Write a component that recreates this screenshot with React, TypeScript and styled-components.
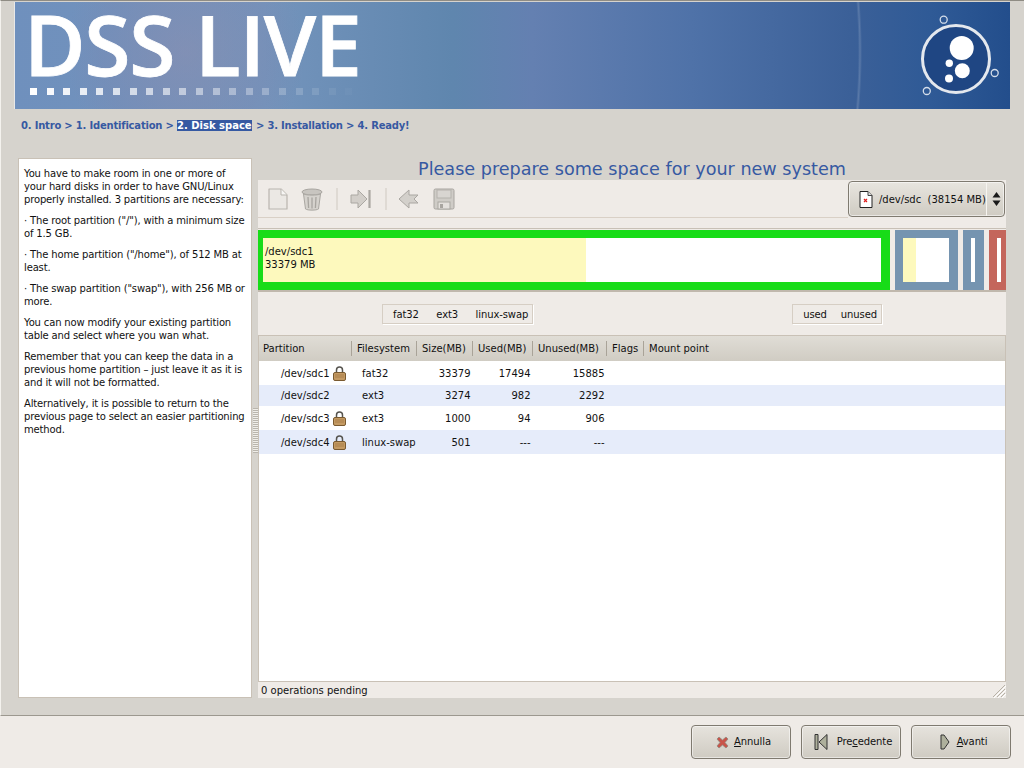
import React, { FC, ReactElement } from 'react';
import styled, { createGlobalStyle } from 'styled-components';

const Global = createGlobalStyle`
    html, body {
        margin: 0;
        padding: 0;
        background: #efebe7;
    }
    * {
        box-sizing: border-box;
    }
    body {
        font-family: "DejaVu Sans", sans-serif;
        font-size: 10px;
        color: #111;
    }
`;

const Page = styled.div`
    width: 1024px;
    height: 768px;
    overflow: hidden;
    display: flex;
    flex-direction: column;
`;

const Main = styled.div`
    height: 716px;
    background: #d6d3cd;
    border-top: 1px solid #8f8c84;
    border-left: 1px solid #f4f2ee;
    border-bottom: 1px solid #9c988f;
    display: flex;
    flex-direction: column;
    padding: 1px 0 0 13px;
`;

const Banner = styled.div`
    width: 996px;
    height: 107px;
    flex: none;
    display: flex;
    justify-content: space-between;
    padding-left: 15px;
    border-left: 1px solid #e8e8e8;
    background:
        radial-gradient(circle 648px at 200px 50px, transparent 643px, rgba(255, 255, 255, 0.16) 645px, transparent 647px),
        radial-gradient(circle 120px at 170px 50px, rgba(150, 140, 170, 0.4), rgba(130, 130, 170, 0.2) 70%, transparent),
        linear-gradient(90deg, #6f90bd 0%, #7494bc 25%, #5f86ae 44%, #6480b1 52%, #4f72a8 68%, #3b6098 84%, #2f5a96 92%, #234e8c 100%);
`;

const BannerText = styled.div`
    display: flex;
    flex-direction: column;
`;

const BannerTitle = styled.div`
    font-family: "Open Sans", sans-serif;
    font-weight: 600;
    font-size: 84px;
    line-height: 84px;
    letter-spacing: -1.2px;
    color: white;
    -webkit-text-stroke: 0.8px white;
    margin-left: -6px;
    white-space: nowrap;
`;

const BannerDots = styled.div`
    display: flex;
    gap: 9.6px;
    margin-top: 2px;
`;

const BannerDot = styled.span<{ $alpha: number }>`
    width: 7px;
    height: 7px;
    background: rgba(255, 255, 255, ${({ $alpha }): number => $alpha});
`;

const BannerLogo = styled.svg`
    width: 80px;
    height: 90px;
    margin: 8px 10px 0 0;
    flex: none;
`;

const Steps = styled.div`
    font-weight: bold;
    font-size: 10px;
    line-height: 13px;
    letter-spacing: -0.2px;
    color: #3659a2;
    margin: 10px 0 0 7px;
    height: 39px;
`;

const StepCurrent = styled.span`
    background: #3659a2;
    color: white;
    letter-spacing: 0;
    margin-right: 1px;
`;

const Body = styled.div`
    display: flex;
    margin-left: 4px;
    height: 540px;
`;

const Help = styled.div`
    width: 234px;
    flex: none;
    background: white;
    border: 1px solid #c9c1b6;
    padding: 8px 0 7px 5px;
    line-height: 13px;
    letter-spacing: -0.15px;
    white-space: nowrap;

    p {
        margin: 0 0 8px;
    }
`;

const Handle = styled.div`
    width: 6px;
    flex: none;
    display: flex;
    align-items: center;
    justify-content: center;
    padding-top: 4px;
`;

const HandleDots = styled.div`
    width: 5px;
    height: 45px;
    background: repeating-linear-gradient(180deg, #b9b5ad 0 1px, #f0eee9 1px 2px);
`;

const Right = styled.div`
    width: 748px;
    flex: none;
    display: flex;
    flex-direction: column;
    margin-top: -1px;
`;

const Title = styled.div`
    font-size: 17.6px;
    line-height: 22px;
    height: 23px;
    padding-top: 1px;
    text-align: center;
    color: #3659a2;
    white-space: nowrap;
`;

const Panel = styled.div`
    flex: 1;
    display: flex;
    flex-direction: column;
    background: #efebe7;
    min-height: 0;
`;

const TopRow = styled.div`
    display: flex;
    height: 38px;
    flex: none;
`;

const Toolbar = styled.div`
    flex: 1;
    display: flex;
    align-items: center;
    padding-left: 8px;
    border-bottom: 1px solid #d9d0c6;
`;

const ToolIcon = styled.svg<{ $gap?: number }>`
    width: 24px;
    height: 24px;
    flex: none;
    margin-right: ${({ $gap }): number => $gap ?? 11}px;
`;

const ToolSep = styled.div`
    width: 2px;
    height: 22px;
    background: #dfdad4;
    margin-right: 11px;
    flex: none;
`;

const DeviceSelect = styled.div`
    width: 157px;
    height: 36px;
    margin: 1px 1px 0 0;
    flex: none;
    display: flex;
    border: 1px solid #7f7a70;
    border-radius: 4px;
    background: linear-gradient(180deg, #e8e5df 0%, #cfcbc2 100%);
    box-shadow: inset 0 0 0 1px rgba(255, 255, 255, 0.55);
`;

const DeviceLabel = styled.div`
    flex: 1;
    display: flex;
    align-items: center;
    gap: 6px;
    padding-left: 10px;
    white-space: nowrap;
`;

const DeviceArrows = styled.div`
    width: 20px;
    flex: none;
    border-left: 1px solid #f6f4f0;
    display: flex;
    align-items: center;
    justify-content: center;
`;

const ChartFrame = styled.div`
    flex: none;
    height: 64px;
    margin-top: 10px;
    padding-top: 1px;
    border-top: 1px solid #c8c0b6;
    border-bottom: 2px solid #c0b8ad;
    display: flex;
    gap: 5px;
    overflow: hidden;
`;

const Part = styled.div<{ $width: number; $color: string; $side: number; $right: number }>`
    width: ${({ $width }): number => $width}px;
    flex: none;
    height: 60px;
    display: flex;
    background: white;
    border-style: solid;
    border-color: ${({ $color }): string => $color};
    border-width: 8px ${({ $right }): number => $right}px 8px ${({ $side }): number => $side}px;
`;

const PartUsed = styled.div<{ $width: number }>`
    width: ${({ $width }): number => $width}px;
    flex: none;
    background: #fdf9bd;
    padding: 7px 0 0 2px;
    line-height: 13px;
    color: #111;
    white-space: nowrap;
`;

const LegendRow = styled.div`
    height: 43px;
    flex: none;
    display: flex;
    align-items: center;
    padding: 1px 0 0 124px;
`;

const LegendBox = styled.div<{ $left?: number; $gap: number }>`
    height: 20px;
    display: flex;
    align-items: center;
    gap: ${({ $gap }): number => $gap}px;
    padding: 0 4px 0 10px;
    margin-left: ${({ $left }): number => $left ?? 0}px;
    letter-spacing: -0.1px;
    border: 1px solid #d6cec4;
    box-shadow: 1px 1px 0 #fff;
`;

const Table = styled.div`
    flex: 1;
    display: flex;
    flex-direction: column;
    background: white;
    border: 1px solid #c9c1b6;
    min-height: 0;
`;

const COLUMNS = '93px 65px 56px 60px 74px 37px 1fr';

const HeadRow = styled.div`
    height: 25px;
    flex: none;
    display: grid;
    grid-template-columns: ${COLUMNS};
    background: linear-gradient(180deg, #e0ddd6 0%, #d0ccc3 100%);
`;

const HeadCell = styled.div`
    display: flex;
    align-items: center;
    padding-left: 5px;
    white-space: nowrap;

    &:first-child {
        padding-left: 4px;
    }

    &::after {
        content: '';
        width: 1px;
        height: 15px;
        margin-left: auto;
        background: #a9a398;
    }

    &:last-child::after {
        display: none;
    }
`;

const Row = styled.div<{ $odd: boolean; $height: number }>`
    height: ${({ $height }): number => $height}px;
    display: grid;
    grid-template-columns: ${COLUMNS};
    align-items: center;
    background: ${({ $odd }): string => ($odd ? '#e6ecfa' : 'white')};
`;

const PartitionCell = styled.div`
    display: flex;
    align-items: center;
    padding-left: 22px;
    white-space: nowrap;
`;

const PartitionName = styled.span`
    width: 52px;
    flex: none;
`;

const TextCell = styled.div`
    padding-left: 10px;
    white-space: nowrap;
`;

const NumCell = styled.div`
    text-align: right;
    padding-right: 2.5px;
    white-space: nowrap;
`;

const Status = styled.div`
    height: 16px;
    flex: none;
    display: flex;
    align-items: center;
    justify-content: space-between;
    padding-left: 3px;
    white-space: nowrap;
`;

const Grip = styled.svg`
    width: 14px;
    height: 14px;
    align-self: flex-end;
`;

const Footer = styled.div`
    flex: 1;
    display: flex;
    justify-content: flex-end;
    gap: 10px;
    padding: 9px 13px 0 0;
    background: #efebe7;
`;

const Button = styled.div<{ $gap: number; $pad: number }>`
    width: 100px;
    height: 34px;
    display: flex;
    align-items: center;
    justify-content: center;
    gap: ${({ $gap }): number => $gap}px;
    padding-left: ${({ $pad }): number => $pad}px;
    letter-spacing: -0.1px;
    border: 1px solid #7f7a70;
    border-radius: 4px;
    background: linear-gradient(180deg, #e6e3dd 0%, #cfcbc2 100%);
    box-shadow: inset 0 0 0 1px rgba(255, 255, 255, 0.5);
    color: #111;
`;

const ButtonLabel = styled.span`
    padding-bottom: 2px;
`;

const Lock: FC = (): ReactElement => (
    <svg width="13" height="15" viewBox="0 0 13 15">
        <path d="M3.500 7V4a3 3 0 0 1 6 0V7" fill="none" stroke="#55534e" strokeWidth="1.5" />
        <rect x="0.5" y="6.5" width="12" height="8" rx="1.5" fill="#c49a63" stroke="#7a5a30" />
        <path d="M2 9h9M2 11h9" stroke="#a97f4a" />
    </svg>
);

const rows = [
    { name: '/dev/sdc1', fs: 'fat32', size: '33379', used: '17494', unused: '15885', locked: true, height: 24 },
    { name: '/dev/sdc2', fs: 'ext3', size: '3274', used: '982', unused: '2292', locked: false, height: 21 },
    { name: '/dev/sdc3', fs: 'ext3', size: '1000', used: '94', unused: '906', locked: true, height: 24 },
    { name: '/dev/sdc4', fs: 'linux-swap', size: '501', used: '---', unused: '---', locked: true, height: 24 },
];

const App: FC = (): ReactElement => (
    <Page>
        <Global />
        <Main>
            <Banner>
                <BannerText>
                    <BannerTitle>DSS LIVE</BannerTitle>
                    <BannerDots>
                        {Array.from({ length: 20 }, (_, i) => (
                            <BannerDot key={i} $alpha={Math.max(1 - i * 0.052, 0.03)} />
                        ))}
                    </BannerDots>
                </BannerText>
                <BannerLogo viewBox="920 10 80 90">
                    <circle cx="956" cy="59" r="33.5" fill="#1f4683" stroke="#e4e8ee" strokeWidth="3" />
                    <circle cx="961.7" cy="48" r="12" fill="white" />
                    <circle cx="962.3" cy="70.7" r="7.5" fill="white" />
                    <circle cx="949.3" cy="63.3" r="3.7" fill="white" />
                    <circle cx="949" cy="78.5" r="4" fill="white" />
                    <circle cx="943.7" cy="19.7" r="3.5" fill="none" stroke="#d5deea" strokeWidth="1.3" />
                    <circle cx="994.7" cy="73" r="3.5" fill="none" stroke="#d5deea" strokeWidth="1.3" />
                    <circle cx="926.8" cy="91" r="3.5" fill="none" stroke="#d5deea" strokeWidth="1.3" />
                </BannerLogo>
            </Banner>
            <Steps>
                0. Intro &gt; 1. Identification &gt; <StepCurrent>2. Disk space</StepCurrent> &gt; 3. Installation &gt; 4. Ready!
            </Steps>
            <Body>
                <Help>
                    <p>
                        You have to make room in one or more of
                        <br />
                        your hard disks in order to have GNU/Linux
                        <br />
                        properly installed. 3 partitions are necessary:
                    </p>
                    <p>
                        · The root partition ("/"), with a minimum size
                        <br />
                        of 1.5 GB.
                    </p>
                    <p>
                        · The home partition ("/home"), of 512 MB at
                        <br />
                        least.
                    </p>
                    <p>
                        · The swap partition ("swap"), with 256 MB or
                        <br />
                        more.
                    </p>
                    <p>
                        You can now modify your existing partition
                        <br />
                        table and select where you wan what.
                    </p>
                    <p>
                        Remember that you can keep the data in a
                        <br />
                        previous home partition – just leave it as it is
                        <br />
                        and it will not be formatted.
                    </p>
                    <p>
                        Alternatively, it is possible to return to the
                        <br />
                        previous page to select an easier partitioning
                        <br />
                        method.
                    </p>
                </Help>
                <Handle>
                    <HandleDots />
                </Handle>
                <Right>
                    <Title>Please prepare some space for your new system</Title>
                    <Panel>
                        <TopRow>
                            <Toolbar>
                                <ToolIcon viewBox="0 0 24 24">
                                    <path d="M3 2h12l6 6v14H3z" fill="#ebe8e4" stroke="#b9b5af" strokeWidth="1.2" strokeLinejoin="round" />
                                    <path d="M15 2v6h6" fill="#f7f6f4" stroke="#b9b5af" />
                                </ToolIcon>
                                <ToolIcon viewBox="0 0 24 24">
                                    <ellipse cx="11" cy="5" rx="10" ry="3" fill="#c8c5c0" stroke="#a8a5a0" />
                                    <path d="M2.500 7l2 15c2 1.500 11 1.500 13 0l2-15c-3 1.500-14 1.500-17 0z" fill="#d5d2cd" stroke="#aaa7a2" />
                                    <path d="M7 10l.6 11M11 10.500V21.500M15 10l-.6 11" stroke="#a8a5a0" strokeWidth="1.3" />
                                </ToolIcon>
                                <ToolSep />
                                <ToolIcon viewBox="0 0 24 24" $gap={12}>
                                    <path d="M2 8h7V3l9 9-9 9v-5H2z" fill="#d2cec9" stroke="#aaa7a2" strokeLinejoin="round" />
                                    <path d="M20.500 3v18" stroke="#aaa7a2" strokeWidth="2.2" />
                                </ToolIcon>
                                <ToolSep />
                                <ToolIcon viewBox="0 0 24 24" $gap={10}>
                                    <path d="M11 3L1 12l10 9v-5h9l-4-4 4-4h-9z" fill="#d3d0cb" stroke="#aaa7a2" strokeLinejoin="round" />
                                </ToolIcon>
                                <ToolIcon viewBox="0 0 24 24">
                                    <rect x="2" y="2" width="20" height="20" rx="1.5" fill="#cfccc7" stroke="#a8a5a0" />
                                    <rect x="5" y="3" width="14" height="8" fill="#d8d5d1" stroke="#b5b2ad" />
                                    <rect x="6" y="15" width="12" height="7" fill="#e4e1dd" stroke="#aaa7a2" />
                                    <rect x="8" y="17" width="3" height="4" fill="#a8a5a0" />
                                </ToolIcon>
                            </Toolbar>
                            <DeviceSelect>
                                <DeviceLabel>
                                    <svg width="14" height="17" viewBox="0 0 14 17">
                                        <path d="M1 .5h8l4 4v12H1z" fill="white" stroke="#222" strokeLinejoin="round" />
                                        <path d="M9 .5v4h4" fill="#ddd" stroke="#444" />
                                        <path d="M5 8l3 3M8 8l-3 3" stroke="#e02020" strokeWidth="1.2" />
                                    </svg>
                                    /dev/sdc&nbsp; (38154 MB)
                                </DeviceLabel>
                                <DeviceArrows>
                                    <svg width="9" height="16" viewBox="0 0 9 16">
                                        <path d="M4.500 1L8.500 6.500H.5zM4.500 15L.5 9.500h8z" fill="#1a1a1a" />
                                    </svg>
                                </DeviceArrows>
                            </DeviceSelect>
                        </TopRow>
                        <ChartFrame>
                            <Part $width={632} $color="#18dc18" $side={5} $right={9}>
                                <PartUsed $width={323}>
                                    /dev/sdc1
                                    <br />
                                    33379 MB
                                </PartUsed>
                            </Part>
                            <Part $width={63} $color="#7594b0" $side={8} $right={9}>
                                <PartUsed $width={13} />
                            </Part>
                            <Part $width={21} $color="#7594b0" $side={8} $right={9} />
                            <Part $width={17} $color="#c4665c" $side={8} $right={5} />
                        </ChartFrame>
                        <LegendRow>
                            <LegendBox $gap={17.5}>
                                <span>fat32</span>
                                <span>ext3</span>
                                <span>linux-swap</span>
                            </LegendBox>
                            <LegendBox $left={259} $gap={14}>
                                <span>used</span>
                                <span>unused</span>
                            </LegendBox>
                        </LegendRow>
                        <Table>
                            <HeadRow>
                                {['Partition', 'Filesystem', 'Size(MB)', 'Used(MB)', 'Unused(MB)', 'Flags', 'Mount point'].map((label) => (
                                    <HeadCell key={label}>{label}</HeadCell>
                                ))}
                            </HeadRow>
                            {rows.map((row, i) => (
                                <Row key={row.name} $odd={i % 2 === 1} $height={row.height}>
                                    <PartitionCell>
                                        <PartitionName>{row.name}</PartitionName>
                                        {row.locked && <Lock />}
                                    </PartitionCell>
                                    <TextCell>{row.fs}</TextCell>
                                    <NumCell>{row.size}</NumCell>
                                    <NumCell>{row.used}</NumCell>
                                    <NumCell>{row.unused}</NumCell>
                                </Row>
                            ))}
                        </Table>
                        <Status>
                            0 operations pending
                            <Grip viewBox="0 0 14 14">
                                <path d="M13 1L1 13M13 5L5 13M13 9L9 13" stroke="#b7b1a6" />
                                <path d="M14 2L2 14M14 6L6 14M14 10L10 14" stroke="#fff" />
                            </Grip>
                        </Status>
                    </Panel>
                </Right>
            </Body>
        </Main>
        <Footer>
            <Button $gap={5} $pad={5}>
                <svg width="13" height="13" viewBox="0 0 13 13">
                    <path d="M1 3l2-2 3.500 3L10 1l2 2-3 3.500L12 10l-2 2-3.500-3L3 12l-2-2 3-3.500z" fill="#c9544a" stroke="#8f8a80" strokeWidth="0.8" />
                </svg>
                <ButtonLabel>
                    <u>A</u>nnulla
                </ButtonLabel>
            </Button>
            <Button $gap={9} $pad={4}>
                <svg width="14" height="16" viewBox="0 0 14 16">
                    <path d="M1 .5h3v15H1z" fill="#aeb09c" stroke="#333" />
                    <path d="M13 .5v15L5 8z" fill="#aeb09c" stroke="#333" strokeLinejoin="round" />
                </svg>
                <ButtonLabel>
                    Pre<u>c</u>edente
                </ButtonLabel>
            </Button>
            <Button $gap={7} $pad={5}>
                <svg width="10" height="16" viewBox="0 0 10 16">
                    <path d="M1 1h3l5 7-5 7H1z" fill="#aeb09c" stroke="#333" strokeLinejoin="round" />
                </svg>
                <ButtonLabel>
                    <u>A</u>vanti
                </ButtonLabel>
            </Button>
        </Footer>
    </Page>
);

export default App;
